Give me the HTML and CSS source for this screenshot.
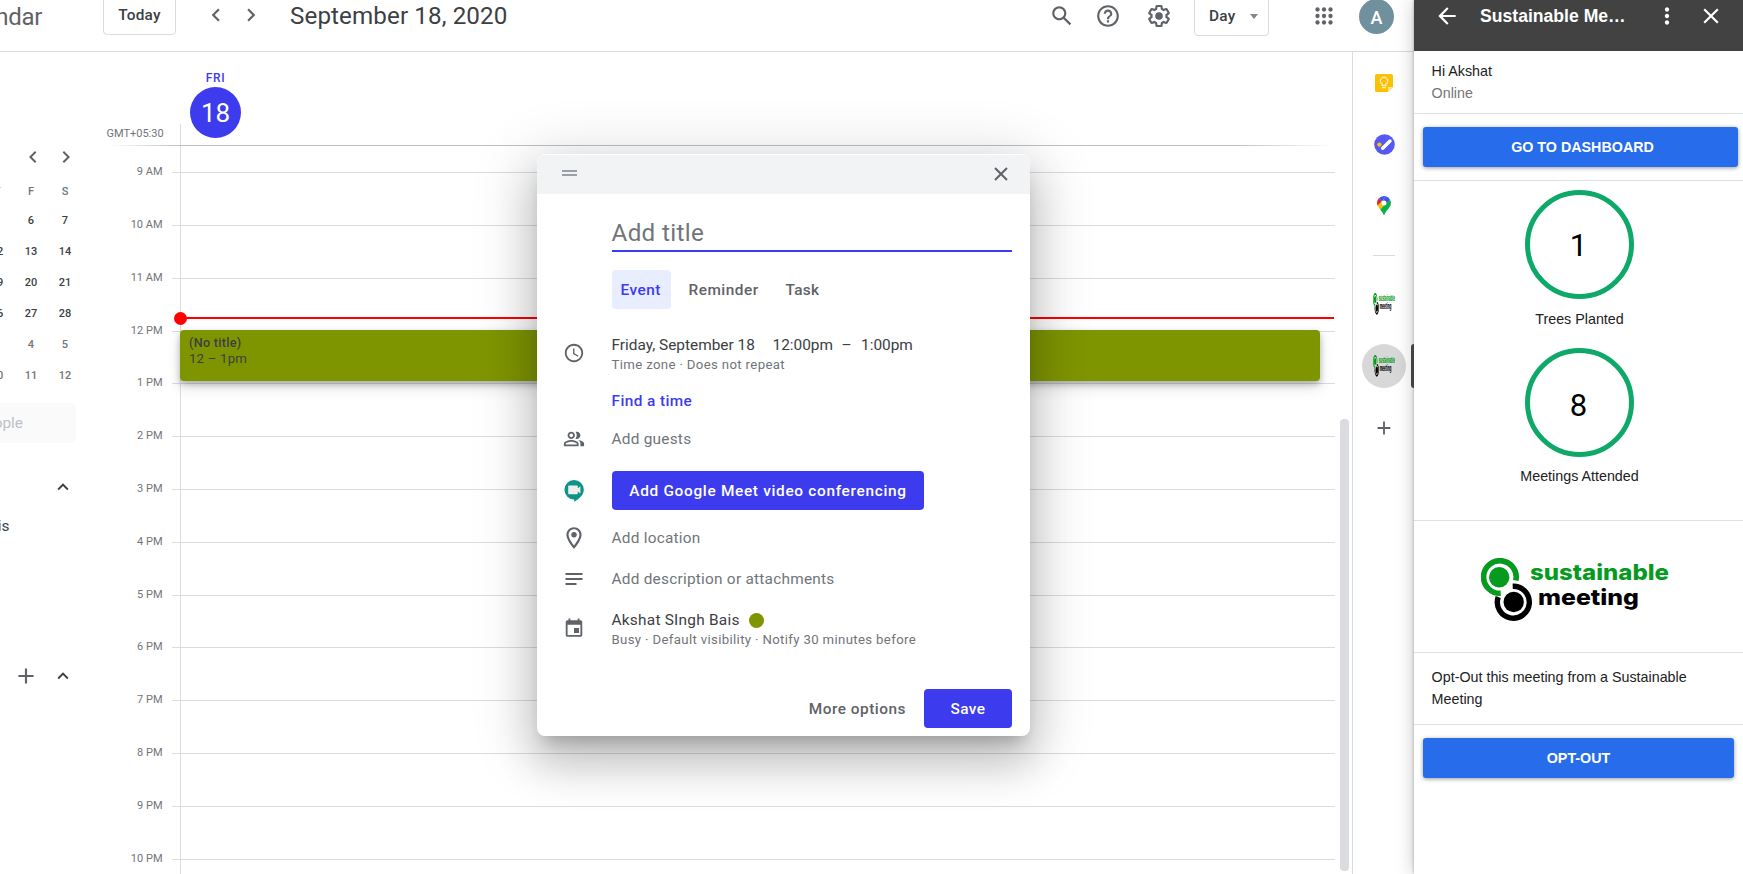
FILE: index.html
```html
<!DOCTYPE html>
<html lang="en">
<head>
<meta charset="utf-8">
<title>Calendar</title>
<link rel="stylesheet" href="styles.css">
</head>
<body>
<svg width="0" height="0" class="defs">
  <symbol id="brand" viewBox="0 0 188 64">
    <g transform="translate(-.8 0)">
    <path d="M35.6 22.5A16.3 16.3 0 1 0 20.500 35.300" fill="none" stroke="#069b1e" stroke-width="5.6"/>
    <circle cx="19" cy="19.200" r="10.200" fill="#069b1e"/>
    <path d="M32.500 28.200A16 16 0 1 1 18 39" fill="none" stroke="#000" stroke-width="5.400"/>
    <circle cx="33.500" cy="44" r="10.200" fill="#000"/>
    </g>
    <text class="brand-text" x="49" y="22.300" font-size="22" textLength="139" lengthAdjust="spacingAndGlyphs" fill="#069b1e">sustainable</text>
    <text class="brand-text" x="57" y="46.500" font-size="22" textLength="101" lengthAdjust="spacingAndGlyphs">meeting</text>
  </symbol>
</svg>
<div class="app">
  <div class="calendar">
    <header class="topbar">
      <div class="product">Calendar</div>
      <button class="btn-outline today">Today</button>
      <svg class="ic prev" width="26" height="26" viewBox="0 0 24 24"><path d="M15.410 7.410L14 6l-6 6 6 6 1.410-1.410L10.830 12z"/></svg>
      <svg class="ic next" width="26" height="26" viewBox="0 0 24 24"><path d="M10 6L8.590 7.410 13.170 12l-4.580 4.590L10 18l6-6z"/></svg>
      <h1 class="date">September 18, 2020</h1>
      <div class="tools">
        <svg class="ic t-search" width="26" height="26" viewBox="0 0 24 24"><path d="M20.490 19l-5.730-5.730C15.530 12.200 16 10.910 16 9.500 16 5.910 13.090 3 9.500 3S3 5.910 3 9.500 5.910 16 9.500 16c1.410 0 2.700-.47 3.770-1.240L19 20.490 20.490 19zM5 9.500C5 7.010 7.010 5 9.500 5S14 7.010 14 9.500 11.990 14 9.500 14 5 11.990 5 9.500z"/></svg>
        <svg class="ic t-help" width="26" height="26" viewBox="0 0 24 24"><path d="M11 18h2v-2h-2v2zm1-16C6.480 2 2 6.480 2 12s4.480 10 10 10 10-4.480 10-10S17.520 2 12 2zm0 18c-4.410 0-8-3.590-8-8s3.590-8 8-8 8 3.590 8 8-3.590 8-8 8zm0-14c-2.210 0-4 1.790-4 4h2c0-1.100.9-2 2-2s2 .9 2 2c0 2-3 1.750-3 5h2c0-2.250 3-2.500 3-5 0-2.210-1.790-4-4-4z"/></svg>
        <svg class="ic t-gear" width="26" height="26" viewBox="0 0 24 24"><path d="M13.850 22.250h-3.700c-.74 0-1.360-.54-1.450-1.270l-.27-1.890c-.27-.14-.53-.29-.79-.46l-1.800.72c-.7.26-1.470-.03-1.810-.65L2.200 15.530c-.35-.66-.2-1.440.36-1.880l1.530-1.190c-.01-.15-.02-.3-.02-.46 0-.15.010-.31.020-.46l-1.520-1.190c-.59-.45-.74-1.260-.37-1.880l1.850-3.190c.34-.62 1.110-.9 1.790-.63l1.810.73c.26-.17.520-.32.780-.46l.27-1.910c.09-.7.710-1.250 1.440-1.250h3.700c.74 0 1.360.54 1.450 1.270l.27 1.890c.27.14.53.29.79.46l1.800-.72c.71-.26 1.480.03 1.820.65l1.840 3.180c.36.66.2 1.440-.36 1.880l-1.520 1.190c.01.15.02.3.020.46s-.01.31-.02.46l1.520 1.190c.56.45.72 1.230.37 1.860l-1.860 3.220c-.34.62-1.110.9-1.800.63l-1.800-.72c-.26.17-.52.320-.78.46l-.27 1.910c-.1.680-.72 1.220-1.460 1.220zm-3.230-2h2.760l.37-2.550.53-.22c.44-.18.880-.44 1.340-.78l.45-.34 2.380.96 1.380-2.400-2.030-1.580.07-.56c.03-.26.060-.51.060-.78s-.03-.53-.06-.78l-.07-.56 2.030-1.580-1.390-2.400-2.390.96-.45-.35c-.42-.32-.87-.58-1.330-.77l-.52-.22-.37-2.550h-2.760l-.37 2.550-.53.210c-.44.190-.88.440-1.340.79l-.45.330-2.380-.95-1.390 2.390 2.030 1.580-.07.560a7 7 0 0 0-.06.79c0 .26.020.53.060.78l.07.56-2.030 1.580 1.380 2.400 2.390-.96.450.35c.43.330.86.580 1.330.77l.53.220.38 2.550z"/><circle cx="12" cy="12" r="3.500"/></svg>
        <button class="btn-outline day">Day<span class="caret"></span></button>
        <svg class="ic t-apps" width="26" height="26" viewBox="0 0 24 24"><g><circle cx="6" cy="6" r="2"/><circle cx="12" cy="6" r="2"/><circle cx="18" cy="6" r="2"/><circle cx="6" cy="12" r="2"/><circle cx="12" cy="12" r="2"/><circle cx="18" cy="12" r="2"/><circle cx="6" cy="18" r="2"/><circle cx="12" cy="18" r="2"/><circle cx="18" cy="18" r="2"/></g></svg>
        <div class="avatar">A</div>
      </div>
    </header>

    <div class="body">
      <aside class="left">
        <div class="mini-nav">
          <svg class="ic" width="24" height="24" viewBox="0 0 24 24"><path d="M15.410 7.410L14 6l-6 6 6 6 1.410-1.410L10.830 12z"/></svg>
          <svg class="ic" width="24" height="24" viewBox="0 0 24 24"><path d="M10 6L8.590 7.410 13.170 12l-4.580 4.590L10 18l6-6z"/></svg>
        </div>
        <div class="mini">
          <span class="dim">T</span><span class="dim">F</span><span class="dim">S</span>
          <span>5</span><span>6</span><span>7</span>
          <span>12</span><span>13</span><span>14</span>
          <span>19</span><span>20</span><span>21</span>
          <span>26</span><span>27</span><span>28</span>
          <span class="dim">3</span><span class="dim">4</span><span class="dim">5</span>
          <span class="dim">10</span><span class="dim">11</span><span class="dim">12</span>
        </div>
        <div class="people"><span>Search for people</span></div>
        <div class="group first"><svg class="dark" width="22" height="22" viewBox="0 0 24 24"><path d="M12 8l-6 6 1.410 1.410L12 10.830l4.590 4.580L18 14z"/></svg></div>
        <div class="owner"><span>Akshat SIngh Bais</span></div>
        <div class="group second">
          <svg class="ic" width="26" height="26" viewBox="0 0 24 24"><path d="M19 13h-6v6h-2v-6H5v-2h6V5h2v6h6v2z"/></svg>
          <svg class="dark" width="22" height="22" viewBox="0 0 24 24"><path d="M12 8l-6 6 1.410 1.410L12 10.830l4.590 4.580L18 14z"/></svg>
        </div>
      </aside>

      <main class="dayview">
        <div class="dayhead">
          <div class="gmt">GMT+05:30</div>
          <div class="daycol">
            <div class="dow">FRI</div>
            <div class="dom">18</div>
          </div>
        </div>
        <div class="hours">
          <div class="hour"><span>9 AM</span><i></i></div>
          <div class="hour"><span>10 AM</span><i></i></div>
          <div class="hour"><span>11 AM</span><i></i></div>
          <div class="hour"><span>12 PM</span><i></i></div>
          <div class="hour"><span>1 PM</span><i></i></div>
          <div class="hour"><span>2 PM</span><i></i></div>
          <div class="hour"><span>3 PM</span><i></i></div>
          <div class="hour"><span>4 PM</span><i></i></div>
          <div class="hour"><span>5 PM</span><i></i></div>
          <div class="hour"><span>6 PM</span><i></i></div>
          <div class="hour"><span>7 PM</span><i></i></div>
          <div class="hour"><span>8 PM</span><i></i></div>
          <div class="hour"><span>9 PM</span><i></i></div>
          <div class="hour"><span>10 PM</span><i></i></div>
          <div class="axis"></div>
          <div class="event"><b>(No title)</b><span>12 – 1pm</span></div>
          <div class="now"></div>
          <div class="scroll"></div>
        </div>
      </main>

      <nav class="rail">
        <svg class="r-keep" width="18" height="18" viewBox="0 0 18 18"><path d="M1.500 0h15A1.500 1.500 0 0 1 18 1.500V13l-5 5H1.500A1.500 1.500 0 0 1 0 16.500v-15A1.500 1.500 0 0 1 1.500 0z" fill="#fbc106"/><path d="M18 13l-5 5v-5z" fill="#fde58a"/><path d="M7.300 11.600v-1.400a3.700 3.700 0 1 1 3.400 0v1.400zM7.300 13.600h3.400" fill="none" stroke="#fff3c4" stroke-width="1.200"/></svg>
        <svg class="r-tasks" width="21" height="21" viewBox="0 0 21 21"><circle cx="10.500" cy="10.500" r="10.300" fill="#5558f2"/><circle cx="5.400" cy="10.600" r="2.200" fill="#fbc106"/><path d="M8.700 14.300l7.300-7.300" stroke="#fff" stroke-width="3.400" stroke-linecap="round"/></svg>
        <svg class="r-maps" width="14" height="19" viewBox="0 0 14 19"><path d="M7 0a6.900 6.900 0 0 0-5.300 2.500L4.900 5.200 8.900.3A7 7 0 0 0 7 0z" fill="#3d58ea"/><path d="M1.700 2.500A6.900 6.900 0 0 0 .7 9.800L4.900 5.200z" fill="#ea1c24"/><path d="M8.900.3L4.900 5.200l4.200 3.500 3.900-4.900A7 7 0 0 0 8.900.3z" fill="#4451ee"/><path d="M.7 9.800c.6 1.300 1.600 2.500 2.500 3.700L9.100 8.500 4.900 5.200z" fill="#fbc106"/><path d="M13 3.700l-9.800 9.800C4.800 15.600 6 17 6.300 18.300q.7 1.200 1.400 0C8.900 14.500 14 11.500 14 7a7 7 0 0 0-1-3.300z" fill="#0cb14b"/><circle cx="7" cy="6.900" r="2.500" fill="#fff"/></svg>
        <hr>
        <svg class="r-logo" width="22" height="22" viewBox="0 0 188 64" preserveAspectRatio="none"><use href="#brand" width="188" height="64"/></svg>
        <div class="r-active"><svg width="22" height="22" viewBox="0 0 188 64" preserveAspectRatio="none"><use href="#brand" width="188" height="64"/></svg></div>
        <svg class="ic r-plus" width="22" height="22" viewBox="0 0 24 24"><path d="M19 13h-6v6h-2v-6H5v-2h6V5h2v6h6v2z"/></svg>
      </nav>
    </div>
  </div>

  <section class="addon">
    <div class="addon-head">
      <svg width="26" height="26" viewBox="0 0 24 24"><path d="M20 11H7.830l5.590-5.590L12 4l-8 8 8 8 1.410-1.410L7.830 13H20v-2z"/></svg>
      <h2>Sustainable Me…</h2>
      <svg width="26" height="26" viewBox="0 0 24 24"><path d="M12 8c1.100 0 2-.9 2-2s-.9-2-2-2-2 .9-2 2 .9 2 2 2zm0 2c-1.100 0-2 .9-2 2s.9 2 2 2 2-.9 2-2-.9-2-2-2zm0 6c-1.100 0-2 .9-2 2s.9 2 2 2 2-.9 2-2-.9-2-2-2z"/></svg>
      <svg class="h-close" width="26" height="26" viewBox="0 0 24 24"><path d="M19 6.410L17.590 5 12 10.590 6.410 5 5 6.410 10.590 12 5 17.590 6.410 19 12 13.410 17.590 19 19 17.590 13.410 12z"/></svg>
    </div>
    <div class="hello"><div>Hi Akshat</div><div class="status">Online</div></div>
    <div class="action"><button class="cta wide">GO TO DASHBOARD</button></div>
    <div class="stats">
      <div class="ring">1</div><div class="cap">Trees Planted</div>
      <div class="ring second">8</div><div class="cap c2">Meetings Attended</div>
    </div>
    <div class="brandbox"><svg width="188" height="64"><use href="#brand"/></svg></div>
    <div class="optout">Opt-Out this meeting from a Sustainable Meeting</div>
    <div class="action last"><button class="cta">OPT-OUT</button></div>
    <div class="tab"></div>
  </section>
</div>

<div class="dialog">
  <div class="dlg-head">
    <span class="grip"></span>
    <svg class="ic" width="20" height="20" viewBox="0 0 20 20"><path d="M4 4l12 12M16 4L4 16" stroke="#5f6368" stroke-width="2"/></svg>
  </div>
  <div class="dlg-body">
    <div class="title-input">Add title</div>
    <div class="tabs"><span class="on">Event</span><span class="rem">Reminder</span><span class="task">Task</span></div>
    <div class="row time">
      <svg class="ic" width="22" height="22" viewBox="0 0 24 24"><path d="M11.990 2C6.470 2 2 6.480 2 12s4.470 10 9.990 10C17.520 22 22 17.520 22 12S17.520 2 11.990 2zM12 20c-4.420 0-8-3.580-8-8s3.580-8 8-8 8 3.580 8 8-3.580 8-8 8zm.5-13H11v6l5.250 3.150.75-1.230-4.500-2.670z"/></svg>
      <div><div class="main"><span class="d">Friday, September 18</span><span class="s">12:00pm</span><span class="dash">–</span><span class="e">1:00pm</span></div><div class="sub s1">Time zone · Does not repeat</div></div>
    </div>
    <div class="find"><span>Find a time</span></div>
    <div class="row guests">
      <svg class="ic" width="22" height="22" viewBox="0 0 24 24"><path d="M15 8c0-1.420-.5-2.730-1.330-3.760.42-.14.860-.24 1.330-.24 2.210 0 4 1.790 4 4s-1.790 4-4 4c-.43 0-.84-.09-1.230-.21-.03-.01-.06-.02-.1-.03A5.980 5.980 0 0 0 15 8zm1.660 5.130C18.030 14.060 19 15.320 19 17v3h4v-3c0-2.180-3.580-3.470-6.340-3.870zM9 6c1.100 0 2 .9 2 2s-.9 2-2 2-2-.9-2-2 .9-2 2-2m0-2C6.790 4 5 5.790 5 8s1.790 4 4 4 4-1.790 4-4-1.790-4-4-4zm0 11c2.700 0 5.800 1.290 6 2.010V18H3v-.99c.2-.72 3.300-2.010 6-2.010m0-2c-2.670 0-8 1.340-8 4v3h16v-3c0-2.660-5.330-4-8-4z"/></svg>
      <span class="hint">Add guests</span>
    </div>
    <div class="row meet">
      <svg width="20" height="22" viewBox="0 0 20 22"><path d="M10 0a9.800 9.800 0 0 1 9.800 9.700c0 5.400-5 9.400-9.600 12.100v-2.400A9.700 9.700 0 0 1 10 0z" fill="#0d9488"/><path d="M5 5.500h8a.8.800 0 0 1 .8.800v2l2.600-2.100v7.400l-2.600-2.100v2a.8.800 0 0 1-.8.800H5a.8.800 0 0 1-.8-.8V6.300a.8.800 0 0 1 .8-.8z" fill="#eee"/></svg>
      <button class="primary">Add Google Meet video conferencing</button>
    </div>
    <div class="row loc">
      <svg class="ic" width="26" height="26" viewBox="0 0 24 24"><path d="M12 2C8.130 2 5 5.130 5 9c0 5.250 7 13 7 13s7-7.750 7-13c0-3.870-3.130-7-7-7zM7 9c0-2.760 2.240-5 5-5s5 2.240 5 5c0 2.880-2.880 7.190-5 9.880C9.920 16.210 7 11.850 7 9z"/><circle cx="12" cy="9" r="2.500"/></svg>
      <span class="hint">Add location</span>
    </div>
    <div class="row desc">
      <svg class="ic" width="18" height="12" viewBox="0 0 18 12"><path d="M.5 0h17v2H.500zM.5 5h17v2H.500zM.5 10h11v2H.500z"/></svg>
      <span class="hint">Add description or attachments</span>
    </div>
    <div class="row cal">
      <svg class="ic" width="22" height="22" viewBox="0 0 24 24"><path d="M19 3.500h-1V1.500h-2v2H8v-2H6v2H5c-1.100 0-2 .9-2 2v14c0 1.100.9 2 2 2h14c1.100 0 2-.9 2-2v-14c0-1.100-.9-2-2-2zm0 16H5v-11h14v11zM12 12h5.500v5.500H12z"/></svg>
      <div><div class="main"><span class="n">Akshat SIngh Bais</span><span class="dot"></span></div><div class="sub s2">Busy · Default visibility · Notify 30 minutes before</div></div>
    </div>
    <div class="footer"><span>More options</span><button class="primary save">Save</button></div>
  </div>
</div>
</body>
</html>
```

FILE: styles.css
```css
* { box-sizing: border-box; }
html, body { margin: 0; width: 1743px; height: 874px; overflow: hidden; background: #fff; }
body { font-family: Roboto, sans-serif; color: #3c4043; position: relative; }
button { font: inherit; border: 0; padding: 0; margin: 0; }
svg { display: block; flex: none; }
.defs { position: absolute; }
.ic { fill: #5f6368; }
.dark { fill: #3c4043; }
.brand-text { font-family: Inter, "Open Sans", sans-serif; font-weight: 800; }

.app { display: flex; height: 874px; }
.calendar { width: 1414px; flex: none; display: flex; flex-direction: column; }

/* Top bar */
.topbar { height: 52px; flex: none; border-bottom: 1px solid #dadce0; display: flex; align-items: flex-start; overflow: hidden; }
.product { width: 42px; flex: none; display: flex; justify-content: flex-end; font-size: 24px; line-height: 30px; margin-top: 2px; color: #5f6368; white-space: nowrap; letter-spacing: -.3px; }
.btn-outline { background: #fff; border: 1px solid #dadce0; border-radius: 4px; height: 40px; margin-top: -5px; font-weight: 500; font-size: 15.4px; letter-spacing: .2px; color: #3c4043; flex: none; }
.today { width: 73px; margin-left: 61px; }
.prev { margin: 2px 0 0 27px; }
.next { margin: 2px 0 0 9px; }
.date { margin: 1px 0 0 26px; font-weight: 400; font-size: 24.200px; line-height: 30px; white-space: nowrap; letter-spacing: .1px; }
.tools { margin-left: auto; display: flex; padding-right: 20px; }
.tools .ic { margin-top: 3px; }
.t-help { margin-left: 20px; }
.t-gear { margin-left: 25px; }
.day { width: 75px; margin-left: 22px; margin-top: -4px; display: flex; align-items: center; justify-content: space-between; padding: 0 10px 0 14px; }
.caret { border: 4.500px solid transparent; border-top: 5px solid #80868b; border-bottom: 0; }
.t-apps { margin-left: 42px; }
.avatar { width: 35px; height: 35px; border-radius: 50%; background: #71909e; color: #fff; margin: -1px 0 0 22px; font-size: 18px; line-height: 37px; text-align: center; font-weight: 500; }

.body { flex: 1; display: flex; min-height: 0; }

/* Left column */
.left { width: 107px; flex: none; overflow: hidden; padding-top: 93px; }
.mini-nav { display: flex; gap: 9px; padding-left: 21px; }
.mini { display: grid; grid-template-columns: repeat(3, 34px); grid-template-rows: 29px; grid-auto-rows: 31px; margin: 7px 0 0 -20px; font-size: 11px; font-weight: 500; text-align: center; line-height: 31px; }
.mini .dim { color: #70757a; }
.people { width: 76px; height: 40px; margin-top: 12px; background: #fafafa; border-radius: 0 6px 6px 0; display: flex; justify-content: flex-end; padding-right: 53px; line-height: 41px; font-size: 15.400px; color: #bdc1c6; white-space: nowrap; }
.group { display: flex; justify-content: flex-end; align-items: center; padding-right: 33px; height: 26px; }
.first { margin-top: 31px; }
.owner { width: 9.500px; display: flex; justify-content: flex-end; margin-top: 15px; height: 22px; line-height: 22px; font-size: 15.400px; white-space: nowrap; }
.second { margin-top: 126px; gap: 13px; }

/* Day view */
.dayview { width: 1246px; flex: none; border-right: 1px solid #dadce0; position: relative; display: flex; flex-direction: column; }
.dayhead { height: 94px; flex: none; display: flex; position: relative; }
.dayhead::after { content: ""; position: absolute; left: 0; bottom: 0; width: 1228px; height: 1px; background: linear-gradient(90deg, transparent, #bdc1c6 70px, #bdc1c6 1130px, transparent); }
.gmt { width: 73px; padding-top: 75px; font-size: 11px; line-height: 13px; color: #70757a; text-indent: -.5px; }
.daycol { border-left: 1px solid #dadce0; border-image: linear-gradient(transparent 71px, #dadce0 71px) 1; padding: 20px 0 0 9px; width: 70px; }
.dow { font-size: 12px; font-weight: 500; letter-spacing: .6px; line-height: 12px; color: #3d3bee; text-align: center; width: 51px; }
.dom { margin-top: 3px; width: 51px; height: 51px; border-radius: 50%; background: #3d3bee; color: #fff; font-size: 26px; line-height: 53px; text-align: center; }
.hours { flex: 1; min-height: 0; overflow: hidden; position: relative; padding-top: 20.250px; }
.hour { height: 52.800px; display: flex; align-items: flex-start; }
.hour span { width: 55.500px; text-align: right; font-size: 11px; line-height: 14px; color: #70757a; margin-top: -1px; }
.hour i { margin: 6px 0 0 9.500px; width: 1163px; height: 1px; background: #dadce0; }
.axis { position: absolute; left: 73px; top: 0; bottom: 0; width: 1px; background: #dadce0; }
.event { position: absolute; left: 73px; top: 184px; width: 1140px; height: 51px; border-radius: 4px; background: #7f9500; padding: 5px 9px; font-size: 13.200px; line-height: 16px; box-shadow: 0 3px 6px rgba(60,64,67,.35), 0 7px 14px rgba(60,64,67,.15); }
.event b { font-weight: 500; display: block; font-size: 12.600px; letter-spacing: .3px; }
.event span { letter-spacing: .2px; display: block; }
.now { position: absolute; left: 73px; top: 171px; width: 1154px; height: 2px; background: #f00; }
.now::before { content: ""; position: absolute; left: -6px; top: -5.500px; width: 13px; height: 13px; border-radius: 50%; background: #f00; }
.scroll { position: absolute; left: 1233px; top: 273px; width: 9px; height: 452px; border-radius: 4px; background: #dadce0; }

/* Icon rail */
.rail { flex: 1; display: flex; flex-direction: column; align-items: center; padding-top: 22px; padding-left: 1px; }
.r-tasks { margin-top: 42px; }
.r-maps { margin-top: 41px; }
.rail hr { width: 22px; border: 0; height: 1px; background: #dadce0; margin: 39.500px 0 0; }
.r-logo { margin-top: 37px; }
.r-active { width: 44px; height: 44px; border-radius: 50%; background: #d8d8d8; display: flex; align-items: center; justify-content: center; margin-top: 29px; }
.r-plus { margin-top: 29px; }

/* Add-on panel */
.addon { flex: 1; background: #fff; position: relative; font-family: "Liberation Sans", Arial, sans-serif; font-size: 14.300px; color: #212121; box-shadow: 0 0 18px rgba(0,0,0,.22), 0 0 3px rgba(0,0,0,.3); line-height: 22px; }
.addon-head { height: 51px; background: #424242; display: flex; padding: 3px 0 0 20px; }
.addon-head svg { fill: #fff; }
.addon-head h2 { margin: 0; padding-left: 20px; width: 194px; font-size: 17.600px; line-height: 26px; font-weight: 700; color: #fff; white-space: nowrap; }
.h-close { margin-left: 18px; }
.hello { height: 63px; border-bottom: 1px solid #e0e0e0; padding: 9px 17.600px; }
.status { color: #757575; }
.action { padding: 13px 5px 0 9px; height: 67px; border-bottom: 1px solid #e0e0e0; }
.cta { display: block; width: 100%; height: 40px; border-radius: 3px; background: #266ceb; color: #fff; font-weight: 700; font-size: 14.300px; box-shadow: 0 1px 4px rgba(0,0,0,.4); }
.wide { padding-left: 4px; }
.last { padding: 13px 9px 0; border: 0; }
.stats { height: 340px; border-bottom: 1px solid #e0e0e0; display: flex; flex-direction: column; align-items: center; padding: 9px 0 0 2px; }
.ring { width: 109px; height: 109px; flex: none; border: 5px solid #0ea968; border-radius: 50%; font-family: Roboto, sans-serif; font-size: 31px; line-height: 101px; text-align: center; color: #000; padding-right: 2px; }
.cap { margin-top: 9px; }
.ring.second { margin-top: 18px; line-height: 106px; }
.c2 { margin-top: 8px; }
.brandbox { height: 132px; border-bottom: 1px solid #e0e0e0; padding: 37px 0 0 67px; }
.optout { height: 72px; border-bottom: 1px solid #e0e0e0; padding: 13px 17.600px; }
.tab { position: absolute; left: -3px; top: 344px; width: 3px; height: 44px; background: #424242; border-radius: 3px 0 0 3px; }

/* Event dialog */
.dialog { position: absolute; left: 537px; top: 154px; width: 493px; height: 582px; border-radius: 8px; background: #fff; box-shadow: 0 26px 42px 3px rgba(0,0,0,.16), 0 10px 60px 10px rgba(0,0,0,.14), 0 12px 16px -7px rgba(0,0,0,.2); overflow: hidden; }
.dlg-head { height: 40px; background: #f1f3f4; border-top: 1px solid #fff; display: flex; justify-content: space-between; padding: 9px 19px 0 24.500px; }
.grip { width: 15px; height: 6px; border: solid #9aa0a6; border-width: 2px 0; margin-top: 6px; }
.dlg-body { padding: 20px 18px 0 75px; display: flex; flex-direction: column; }
.title-input { height: 38px; border-bottom: 2px solid #3d3bee; font-size: 24.200px; line-height: 39px; color: #70757a; letter-spacing: .35px; text-indent: -.5px; }
.tabs { display: flex; margin-top: 18px; height: 39px; line-height: 41px; font-size: 15.400px; font-weight: 500; letter-spacing: .5px; color: #5f6368; }
.tabs span { padding: 0 0 0 8.500px; }
.tabs .on { width: 59px; background: #e8edff; color: #3d3bee; border-radius: 4px; }
.tabs .rem { margin-left: 9px; width: 97px; }
.tabs .task { letter-spacing: .3px; }
.row { display: flex; align-items: center; position: relative; font-size: 15.400px; }
.row > svg { position: absolute; left: -38px; transform: translateX(-50%); }
.main { display: flex; align-items: center; line-height: 20px; margin-left: -.5px; }
.sub { font-size: 13.200px; line-height: 19px; letter-spacing: .35px; color: #70757a; white-space: nowrap; margin-left: -.5px; }
.hint { color: #70757a; letter-spacing: .24px; margin-left: -.5px; }
.time { margin-top: 26px; height: 39px; }
.time > svg { top: 7px; }
.main .d { width: 161px; }
.main .s { width: 69px; }
.main .dash { width: 19.500px; }
.main .n { letter-spacing: .25px; }
.find { margin-top: 17px; height: 20px; line-height: 20px; font-size: 15.400px; font-weight: 500; color: #3d3bee; letter-spacing: .4px; text-indent: -.5px; }
.guests { margin-top: 18px; height: 20px; }
.meet { margin-top: 22px; height: 39px; }
.primary { height: 39px; width: 312px; border-radius: 4px; background: #3d3bee; color: #fff; font-size: 15.400px; font-weight: 500; letter-spacing: .68px; white-space: nowrap; }
.loc { margin-top: 17px; height: 22px; }
.desc { margin-top: 19px; height: 22px; }
.cal { margin-top: 20px; height: 39px; }
.cal > svg { top: 7px; }
.dot { width: 15px; height: 15px; border-radius: 50%; background: #7f9500; margin-left: 9px; }
.footer { display: flex; justify-content: flex-end; align-items: center; gap: 18px; margin-top: 40px; font-size: 15.400px; font-weight: 500; color: #5f6368; letter-spacing: .5px; }
.save { width: 88px; letter-spacing: .4px; }
```
